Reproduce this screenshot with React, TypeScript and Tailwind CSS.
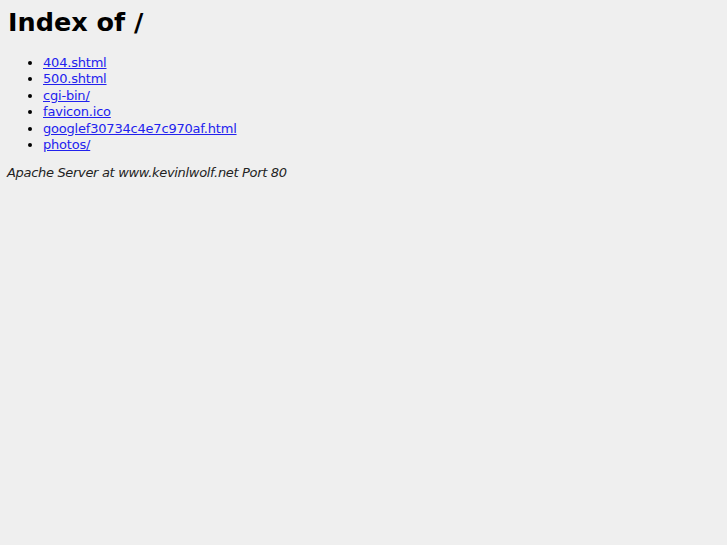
const files = [
  "404.shtml",
  "500.shtml",
  "cgi-bin/",
  "favicon.ico",
  "googlef30734c4e7c970af.html",
  "photos/",
];

export default function App() {
  return (
    <div className="min-h-[545px] bg-[#efefef] px-2 pt-[5px] font-['DejaVu_Sans',sans-serif] text-[13px] leading-[16.4px] text-black">
      <h1 className="text-[25.5px] font-bold leading-[34px]">Index of /</h1>
      <ul className="mt-[16px] list-disc pl-[35px] tracking-[-0.2px]">
        {files.map((f) => (
          <li key={f}>
            <a href={f} className="text-[#2222ee] underline">
              {f}
            </a>
          </li>
        ))}
      </ul>
      <address className="-ml-px mt-[12px] italic tracking-[-0.32px] text-[#222]">
        Apache Server at www.kevinlwolf.net Port 80
      </address>
    </div>
  );
}
